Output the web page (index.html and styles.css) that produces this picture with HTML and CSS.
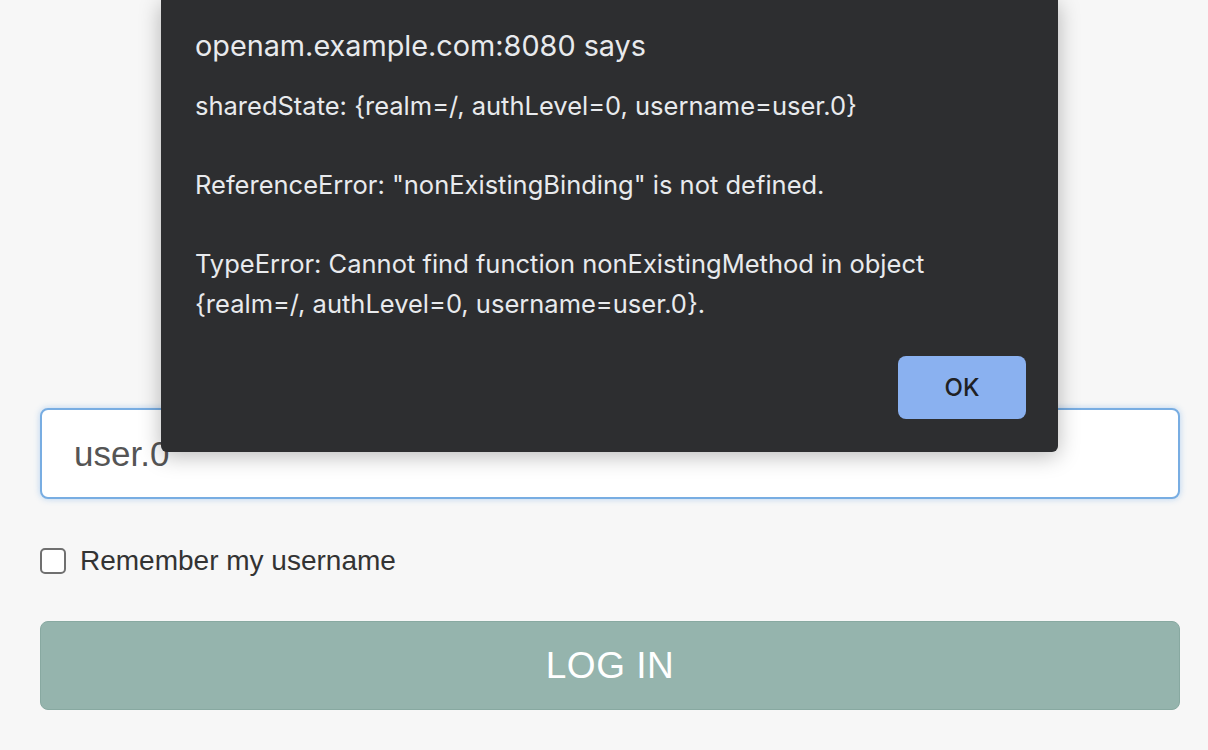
FILE: index.html
```html
<!DOCTYPE html>
<html>
<head>
<meta charset="utf-8">
<link rel="stylesheet" href="styles.css">
</head>
<body>
<div class="page">
  <form class="login">
    <input class="field" type="text" value="user.0">
    <label class="remember"><span class="box"></span>Remember my username</label>
    <button type="button" class="submit">LOG IN</button>
  </form>
</div>
<div class="dialog">
  <div class="title">openam.example.com:8080 says</div>
  <div class="msg">sharedState: {realm=/, authLevel=0, username=user.0}<br><br>ReferenceError: "nonExistingBinding" is not defined.<br><br>TypeError: Cannot find function nonExistingMethod in object<br>{realm=/, authLevel=0, username=user.0}.</div>
  <div class="actions"><button type="button" class="ok">OK</button></div>
</div>
</body>
</html>
```

FILE: styles.css
```css
html, body {
  margin: 0;
  padding: 0;
  background: #f7f7f7;
  width: 1208px;
  height: 750px;
  overflow: hidden;
}
body {
  font-family: "Liberation Sans", Arial, sans-serif;
}
.page {
  padding: 408px 28px 0 40px;
}
.login {
  display: flex;
  flex-direction: column;
  width: 1140px;
}
.field {
  box-sizing: border-box;
  width: 1140px;
  height: 91px;
  margin: 0;
  border: 2px solid #78ade2;
  border-radius: 8px;
  background: #fff;
  box-shadow: 0 0 6px rgba(102, 165, 230, 0.45);
  padding: 0 0 0 32px;
  font-family: "Liberation Sans", Arial, sans-serif;
  font-size: 35px;
  color: #555;
  outline: none;
}
.remember {
  display: flex;
  align-items: center;
  margin-top: 48px;
  height: 28px;
  font-size: 28px;
  color: #333;
  gap: 14px;
}
.box {
  box-sizing: border-box;
  width: 26px;
  height: 26px;
  border: 2px solid #707070;
  border-radius: 5px;
  background: #fff;
}
.submit {
  box-sizing: border-box;
  margin-top: 46px;
  width: 1140px;
  height: 89px;
  border: 1px solid #88a9a1;
  border-radius: 8px;
  background: #95b4ad;
  color: #fff;
  font-family: "Liberation Sans", Arial, sans-serif;
  font-size: 37px;
  letter-spacing: 0.5px;
  padding: 0;
}
.dialog {
  position: absolute;
  left: 161px;
  top: 0;
  width: 897px;
  height: 452px;
  box-sizing: border-box;
  background: #2d2e30;
  border-radius: 0 0 6px 6px;
  box-shadow: 0 4px 22px rgba(0, 0, 0, 0.28);
  padding: 26px 32px 33px 34px;
  display: flex;
  flex-direction: column;
  font-family: Inter, "Noto Sans", sans-serif;
  color: #e8eaed;
}
.title {
  font-size: 28.8px;
  line-height: 40px;
}
.msg {
  margin-top: 20px;
  font-size: 25.5px;
  line-height: 39.5px;
}
.actions {
  margin-top: auto;
  display: flex;
  justify-content: flex-end;
}
.ok {
  width: 128px;
  height: 63px;
  border: none;
  border-radius: 8px;
  background: #8ab1f0;
  color: #202124;
  font-family: Inter, "Noto Sans", sans-serif;
  font-size: 24px;
  font-weight: 500;
  padding: 0;
}
```
